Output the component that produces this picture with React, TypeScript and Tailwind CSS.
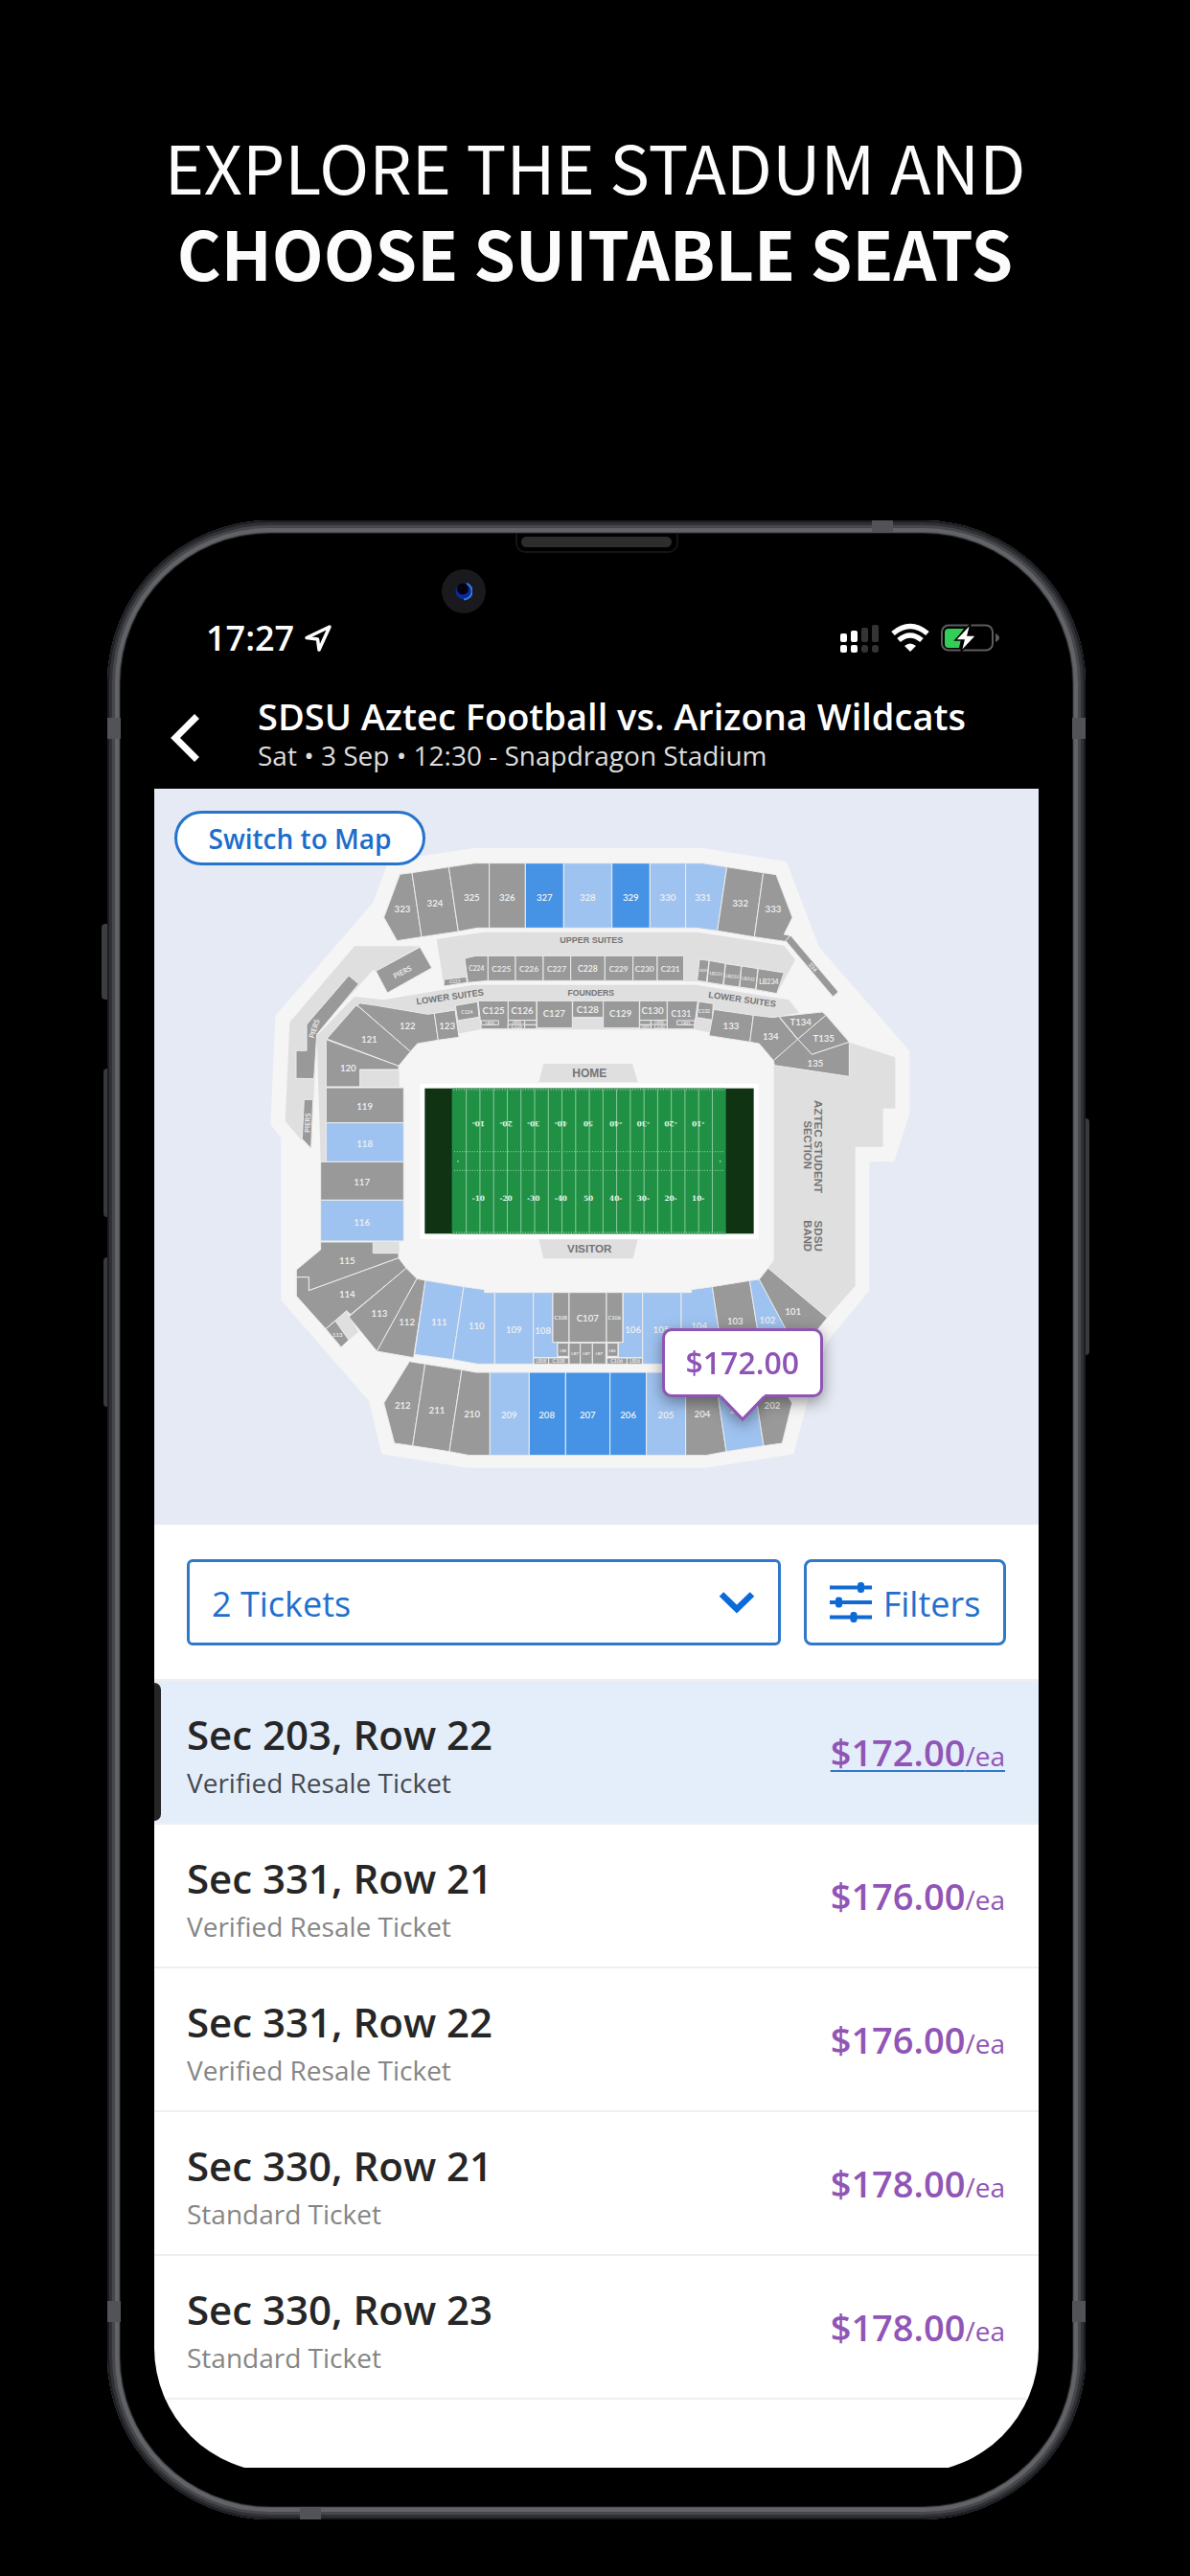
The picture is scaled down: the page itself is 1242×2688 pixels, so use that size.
import React from "react";

type Shape = { p: string; c?: "g" | "l" | "b" };
type Label = { t: string; x: number; y: number; s?: number; r?: number };

const FILL = { g: "#999999", l: "#9fc3f0", b: "#4693e6" };

const box = (x1: number, y1: number, x2: number, y2: number) =>
  `${x1},${y1} ${x2},${y1} ${x2},${y2} ${x1},${y2}`;

const SECTIONS: Shape[] = [
  // upper deck, home side
  { p: "472,157 510,152 540,353 463,365 422,292" },
  { p: "510,152 625,134 655,336 540,353" },
  { p: "625,134 705,122 752,122 752,325 715,325 655,336" },
  { p: box(752, 122, 865, 325) },
  { p: box(865, 122, 985, 325), c: "b" },
  { p: box(985, 122, 1136, 325), c: "l" },
  { p: box(1136, 122, 1255, 325), c: "b" },
  { p: box(1255, 122, 1367, 325), c: "l" },
  { p: "1367,122 1420,122 1496,134 1466,334 1400,325 1367,325", c: "l" },
  { p: "1496,134 1610,152 1582,353 1466,334" },
  { p: "1610,152 1650,158 1701,292 1675,345 1692,348 1685,368 1582,353" },
  { p: "1695,348 1845,525 1828,540 1680,365" },
  // upper suites
  { p: "675,420 710,412 748,412 748,490 685,496" },
  { p: box(748, 412, 834, 490) },
  { p: box(834, 412, 921, 490) },
  { p: box(921, 412, 1007, 490) },
  { p: box(1007, 412, 1114, 490) },
  { p: box(1114, 412, 1202, 490) },
  { p: box(1202, 412, 1278, 490) },
  { p: box(1278, 412, 1361, 490) },
  { p: "610,486 680,478 682,496 610,507" },
  { p: "1410,423 1440,427 1432,494 1403,490" },
  { p: "1441,427 1491,436 1484,503 1434,495" },
  { p: "1492,437 1541,444 1535,510 1486,503" },
  { p: "1542,444 1593,452 1586,517 1536,510" },
  { p: "1594,452 1675,465 1652,530 1587,518" },
  // lower bowl, home side
  { p: "345,560 400,568 560,595 580,592 592,676 527,687 505,712 340,568" },
  { p: "335,567 345,573 505,712 468,757 243,672" },
  { p: "241,674 468,757 468,768 347,768 347,822 241,822" },
  { p: "580,592 645,582 657,667 592,676" },
  { p: "646,568 715,556 720,604 653,615" },
  { p: "717,553 811,553 811,641 727,641" },
  { p: box(727, 615, 781, 628) },
  { p: box(811, 553, 900, 614) },
  { p: box(811, 614, 863, 641) },
  { p: box(811, 627, 863, 641) },
  { p: box(863, 614, 900, 628) },
  { p: box(863, 628, 900, 641) },
  { p: box(901, 553, 1012, 638) },
  { p: box(1013, 553, 1109, 605) },
  { p: box(1109, 553, 1222, 638) },
  { p: box(1223, 553, 1309, 614) },
  { p: box(1223, 614, 1258, 628) },
  { p: box(1223, 628, 1258, 641) },
  { p: box(1258, 614, 1309, 641) },
  { p: box(1258, 627, 1309, 641) },
  { p: "1309,553 1405,553 1393,641 1309,641" },
  { p: box(1340, 615, 1395, 628) },
  { p: "1408,555 1453,562 1450,613 1402,605" },
  { p: "1455,580 1579,598 1568,682 1440,662" },
  { p: "1579,598 1640,605 1658,602 1718,675 1642,740 1597,687 1568,682" },
  { p: "1660,602 1795,588 1806,598 1718,673" },
  { p: "1806,598 1879,682 1762,721 1718,673" },
  { p: "1718,673 1762,721 1879,682 1879,790 1645,755 1642,740" },
  // west end
  { p: box(241, 825, 484, 935) },
  { p: box(241, 935, 484, 1057), c: "l" },
  { p: box(224, 1057, 484, 1177) },
  { p: box(224, 1177, 484, 1305), c: "l" },
  { p: "224,1308 388,1308 388,1343 468,1343 468,1358 187,1460 187,1418 148,1418 148,1395 224,1332" },
  { p: "148,1418 187,1418 187,1460 468,1358 492,1390 318,1535 305,1523 240,1580 148,1477" },
  { p: "492,1390 525,1423 400,1650 312,1542" },
  { p: "240,1580 270,1555 312,1615 288,1637" },
  { p: "525,1423 552,1428 515,1670 400,1650" },
  // lower bowl, visitor side
  { p: "552,1428 672,1448 638,1676 518,1660", c: "l" },
  { p: "672,1448 737,1457 737,1466 769,1466 769,1690 715,1690 638,1676", c: "l" },
  { p: box(769, 1466, 890, 1690), c: "l" },
  { p: "890,1466 951,1466 951,1622 966,1622 966,1670 890,1670", c: "l" },
  { p: box(951, 1466, 1002, 1622) },
  { p: box(1002, 1466, 1119, 1622) },
  { p: box(1119, 1466, 1170, 1622) },
  { p: box(966, 1624, 1000, 1666) },
  { p: box(1002, 1624, 1037, 1690) },
  { p: box(1037, 1624, 1075, 1690) },
  { p: box(1075, 1624, 1117, 1690) },
  { p: box(1121, 1624, 1155, 1666) },
  { p: box(891, 1671, 938, 1690) },
  { p: box(938, 1671, 1001, 1690) },
  { p: box(1120, 1671, 1183, 1690) },
  { p: box(1183, 1671, 1231, 1690) },
  { p: "1171,1466 1232,1466 1232,1670 1156,1670 1156,1622 1171,1622", c: "l" },
  { p: box(1232, 1466, 1353, 1690), c: "l" },
  { p: "1353,1466 1385,1466 1385,1457 1450,1448 1485,1676 1410,1690 1353,1690", c: "l" },
  { p: "1450,1448 1567,1429 1605,1660 1485,1676" },
  { p: "1567,1429 1597,1425 1720,1650 1605,1665", c: "l" },
  { p: "1625,1390 1810,1545 1750,1620 1715,1645 1597,1425" },
  // upper deck, visitor side
  { p: "502,1682 551,1690 512,1946 455,1938 422,1812" },
  { p: "551,1690 666,1708 627,1964 512,1946" },
  { p: "666,1708 710,1716 754,1716 754,1976 690,1976 627,1964" },
  { p: box(754, 1716, 877, 1976), c: "l" },
  { p: box(877, 1716, 991, 1976), c: "b" },
  { p: box(991, 1716, 1130, 1976), c: "b" },
  { p: box(1130, 1716, 1244, 1976), c: "b" },
  { p: box(1244, 1716, 1367, 1976), c: "l" },
  { p: "1367,1716 1457,1716 1494,1964 1430,1976 1367,1976" },
  { p: "1457,1716 1475,1713 1572,1695 1611,1946 1494,1964", c: "l" },
  { p: "1572,1695 1620,1685 1700,1812 1669,1938 1611,1946" },
  // piers
  { p: "397,460 535,385 572,450 433,528" },
  { p: "312,474 343,500 212,658 203,797 147,796 147,709 180,709 180,627" },
  { p: "172,862 200,862 194,1015 166,985" },
];

const CONCOURSE: string[] = [
  "330,382 535,382 397,460 388,456 215,650 205,800 195,1010 160,985 113,930 127,620",
  "587,360 735,338 1405,338 1675,380 1710,425 1652,530 1400,492 720,492 610,507",
  "330,540 420,550 700,503 1400,503 1690,550 1722,590 1640,605 1440,652 1395,643 725,643 660,655 560,620 345,570 245,670 240,1056 224,1056 212,662",
  box(347, 770, 470, 822),
  box(388, 1306, 470, 1343),
  "305,1523 342,1590 312,1615 270,1555",
  "1643,755 1880,790 1880,683 2023,730 2023,890 1985,890 1985,1010 1898,1010 1898,1445 1810,1545 1625,1390 1643,1365",
  "922,750 1200,750 1217,808 907,808",
  "907,1300 1217,1300 1202,1360 922,1360",
];

const LABELS: Label[] = [
  { t: "323", x: 480, y: 265 }, { t: "324", x: 582, y: 247 }, { t: "325", x: 697, y: 229 },
  { t: "326", x: 808, y: 229 }, { t: "327", x: 925, y: 229 }, { t: "328", x: 1060, y: 229 },
  { t: "329", x: 1195, y: 229 }, { t: "330", x: 1311, y: 229 }, { t: "331", x: 1421, y: 229 },
  { t: "332", x: 1538, y: 248 }, { t: "333", x: 1641, y: 265 },
  { t: "334", x: 1765, y: 448, s: 18, r: 50 },
  { t: "C223", x: 644, y: 492, s: 14, r: -5 },
  { t: "C224", x: 712, y: 453, s: 20 }, { t: "C225", x: 790, y: 452, s: 25 },
  { t: "C226", x: 876, y: 452, s: 25 }, { t: "C227", x: 963, y: 452, s: 25 },
  { t: "C228", x: 1060, y: 452, s: 26 }, { t: "C229", x: 1157, y: 452, s: 25 },
  { t: "C230", x: 1238, y: 452, s: 25 }, { t: "C231", x: 1319, y: 452, s: 25 },
  { t: "LB230", x: 1421, y: 460, s: 8 }, { t: "LB231", x: 1462, y: 468, s: 14, r: 6 },
  { t: "LB232", x: 1513, y: 476, s: 14, r: 6 }, { t: "LB233", x: 1563, y: 484, s: 14, r: 6 },
  { t: "LB234", x: 1627, y: 492, s: 21 },
  { t: "122", x: 496, y: 631 }, { t: "121", x: 376, y: 674 }, { t: "120", x: 310, y: 763 },
  { t: "123", x: 620, y: 633 }, { t: "C124", x: 682, y: 589, s: 15 },
  { t: "C125", x: 765, y: 585 }, { t: "C126", x: 855, y: 585 }, { t: "C127", x: 955, y: 592 },
  { t: "C128", x: 1060, y: 580 }, { t: "C129", x: 1163, y: 592 }, { t: "C130", x: 1263, y: 585 },
  { t: "C131", x: 1353, y: 594, s: 26 }, { t: "C132", x: 1425, y: 586, s: 15 },
  { t: "LB25", x: 754, y: 622, s: 12 }, { t: "LB26", x: 838, y: 621, s: 12 },
  { t: "C126", x: 838, y: 634, s: 14 }, { t: "LB29", x: 1240, y: 634, s: 10 },
  { t: "LB30", x: 1284, y: 621, s: 12 }, { t: "C130", x: 1284, y: 634, s: 14 },
  { t: "LB31", x: 1368, y: 622, s: 12 },
  { t: "133", x: 1509, y: 633 }, { t: "134", x: 1633, y: 666 }, { t: "T134", x: 1727, y: 620 },
  { t: "T135", x: 1799, y: 671 }, { t: "135", x: 1773, y: 748 },
  { t: "119", x: 362, y: 885 }, { t: "118", x: 362, y: 1001 }, { t: "117", x: 353, y: 1121 },
  { t: "116", x: 353, y: 1247 }, { t: "115", x: 307, y: 1367 }, { t: "114", x: 307, y: 1471 },
  { t: "113", x: 408, y: 1532 }, { t: "113", x: 277, y: 1600, s: 18 }, { t: "112", x: 494, y: 1558 },
  { t: "111", x: 595, y: 1558 }, { t: "110", x: 712, y: 1572 }, { t: "109", x: 829, y: 1582 },
  { t: "108", x: 920, y: 1587 }, { t: "C108", x: 976, y: 1545, s: 17 },
  { t: "C107", x: 1060, y: 1548 }, { t: "C106", x: 1144, y: 1545, s: 17 },
  { t: "LB8", x: 983, y: 1648, s: 12 }, { t: "LB7", x: 1020, y: 1657, s: 13 },
  { t: "LB7", x: 1056, y: 1657, s: 13 }, { t: "LB7", x: 1096, y: 1657, s: 13 },
  { t: "LB6", x: 1137, y: 1648, s: 12 }, { t: "LB08", x: 915, y: 1681, s: 14 },
  { t: "C108", x: 969, y: 1681, s: 16 }, { t: "C106", x: 1151, y: 1681, s: 16 },
  { t: "LB06", x: 1208, y: 1681, s: 14 },
  { t: "106", x: 1202, y: 1582 }, { t: "105", x: 1290, y: 1582 }, { t: "104", x: 1409, y: 1570 },
  { t: "103", x: 1522, y: 1557 }, { t: "102", x: 1623, y: 1553 }, { t: "101", x: 1703, y: 1525 },
  { t: "212", x: 481, y: 1820 }, { t: "211", x: 588, y: 1834 }, { t: "210", x: 698, y: 1848 },
  { t: "209", x: 814, y: 1850 }, { t: "208", x: 932, y: 1850 }, { t: "207", x: 1060, y: 1850 },
  { t: "206", x: 1187, y: 1850 }, { t: "205", x: 1305, y: 1850 }, { t: "204", x: 1419, y: 1848 },
  { t: "203", x: 1530, y: 1835 }, { t: "202", x: 1638, y: 1820 },
  { t: "PIERS", x: 480, y: 463, s: 23, r: -27 }, { t: "PIERS", x: 204, y: 640, s: 23, r: -72 },
  { t: "PIERS", x: 183, y: 935, s: 23, r: -88 },
];

const ZONES: Label[] = [
  { t: "UPPER SUITES", x: 1072, y: 361, s: 27 },
  { t: "FOUNDERS", x: 1070, y: 527, s: 26 },
  { t: "LOWER SUITES", x: 629, y: 540, s: 28, r: -8 },
  { t: "LOWER SUITES", x: 1544, y: 548, s: 28, r: 8 },
  { t: "HOME", x: 1066, y: 778, s: 36 },
  { t: "VISITOR", x: 1066, y: 1327, s: 35 },
  { t: "AZTEC STUDENT", x: 1784, y: 1010, s: 35, r: 90 },
  { t: "SECTION", x: 1748, y: 1004, s: 34, r: 90 },
  { t: "SDSU", x: 1784, y: 1289, s: 35, r: 90 },
  { t: "BAND", x: 1748, y: 1289, s: 34, r: 90 },
];

const YARDS = ["-10", "-20", "-30", "-40", "50", "40-", "30-", "20-", "10-"];

function Texts({ items, size }: { items: Label[]; size: number }) {
  return (
    <>
      {items.map((l, i) => (
        <text
          key={i}
          x={l.x}
          y={l.y}
          fontSize={l.s ?? size}
          dy={(l.s ?? size) * 0.36}
          textAnchor="middle"
          transform={l.r ? `rotate(${l.r} ${l.x} ${l.y})` : undefined}
        >
          {l.t}
        </text>
      ))}
    </>
  );
}

function SeatMap() {
  return (
    <svg viewBox="-297 -111 2769 2304" className="block h-auto w-full" role="img" aria-label="Stadium seating map">
      <polygon
        fill="#f5f5f5"
        points="705,75 437,115 388,245 82,600 67,940 100,982 100,1490 375,1805 415,1972 685,2015 1430,2015 1705,1972 1750,1800 1810,1620 1942,1460 1942,1057 2020,1055 2068,905 2068,710 1785,385 1682,117 1420,75"
      />
      {CONCOURSE.map((p) => (
        <polygon key={p} points={p} fill="#dfdfdf" />
      ))}
      <g stroke="#ececec" strokeWidth="3">
        {SECTIONS.map((s) => (
          <polygon key={s.p} points={s.p} fill={FILL[s.c ?? "g"]} />
        ))}
      </g>
      <rect x="535" y="812" width="1060" height="487" fill="#ffffff" />
      <rect x="550" y="827" width="1030" height="455" fill="#103314" />
      <rect x="635" y="827" width="858" height="455" fill="#1f9044" />
      <g stroke="#8ccb9f" strokeWidth="3">
        {Array.from({ length: 19 }, (_, i) => (
          <line key={i} x1={680 + i * 42.8} x2={680 + i * 42.8} y1="830" y2="1280" />
        ))}
      </g>
      <g stroke="#8ccb9f" strokeWidth="4" strokeDasharray="3 5">
        <line x1="642" x2="1488" y1="1025" y2="1025" />
        <line x1="642" x2="1488" y1="1084" y2="1084" />
        <line x1="640" x2="1490" y1="831" y2="831" />
        <line x1="640" x2="1490" y1="1278" y2="1278" />
      </g>
      <circle cx="654" cy="1055" r="3" fill="#8ccb9f" />
      <circle cx="1475" cy="1055" r="3" fill="#8ccb9f" />
      <g fill="#e6f5ea" fontWeight="700" className="font-['DejaVu_Serif',serif]">
        {YARDS.map((y, i) => {
          const x = 718 + i * 86;
          return (
            <g key={i} fontSize="22" textAnchor="middle">
              <text x={x} y="1180">{y}</text>
              <text x={x} y="930" transform={`rotate(180 ${x} 930)`}>{YARDS[8 - i]}</text>
            </g>
          );
        })}
      </g>
      <g fill="#f1f1f1" fontWeight="600" className="font-['Lato',sans-serif]">
        <Texts items={LABELS} size={29} />
      </g>
      <g fill="#747474" fontWeight="700" className="font-['Liberation_Sans',sans-serif]">
        <Texts items={ZONES} size={28} />
      </g>
    </svg>
  );
}

function PriceFlag() {
  return (
    <div className="absolute left-[66.5%] top-[73.3%] flex -translate-x-1/2 flex-col items-center drop-shadow-[0_5px_8px_rgba(0,0,0,0.4)]">
      <div className="flex h-[72px] w-[168px] items-center justify-center rounded-[10px] border-3 border-[#8f54b4] bg-white text-[32px] font-semibold text-[#8e53b5]">
        $172.00
      </div>
      <svg viewBox="0 0 46 28" className="-mt-[3px] h-[28px] w-[46px]" aria-hidden="true">
        <path d="M0 0H46V3L23 27L0 3Z" fill="#ffffff" />
        <path d="M0 2L23 26L46 2" fill="none" stroke="#8f54b4" strokeWidth="3" />
      </svg>
    </div>
  );
}

function StatusIcons() {
  return (
    <svg viewBox="0 0 168 32" className="h-[32px] w-[168px]" aria-hidden="true">
      <g fill="#ffffff">
        <rect x="1" y="11" width="7" height="9" rx="2" />
        <rect x="12" y="8" width="7" height="12" rx="2" />
        <rect x="1" y="23" width="7" height="8" rx="2" />
        <rect x="12" y="23" width="7" height="8" rx="2" />
      </g>
      <g fill="#343434">
        <rect x="23" y="5" width="7" height="15" rx="2" />
        <rect x="34" y="2" width="7" height="18" rx="2" />
        <rect x="23" y="23" width="7" height="8" rx="3" />
        <rect x="34" y="23" width="7" height="8" rx="3" />
      </g>
      <g fill="none" stroke="#ffffff" strokeWidth="5.5">
        <path d="M56 11Q74 -4 92 11" />
        <path d="M62 18Q74 8 86 18" />
      </g>
      <path d="M68 24Q74 19 80 24L74 30Z" fill="#ffffff" />
      <rect x="107" y="2.500" width="53" height="26" rx="7" fill="none" stroke="#5c5c5c" strokeWidth="2" />
      <path d="M163 11Q167 13 167 15.500Q167 18 163 20Z" fill="#5c5c5c" />
      <path d="M114 6H130L122 17H127L125 26H114Q110 26 110 22V10Q110 6 114 6Z" fill="#32ce57" />
      <path d="M137 1L121 18H130L127 30L143 13H134Z" fill="#ffffff" stroke="#000000" strokeWidth="1.500" />
    </svg>
  );
}

function SideBands() {
  return (
    <>
      <span className="h-[22px] w-[14px] bg-[#525357]" />
      <span className="h-[22px] w-[14px] bg-[#525357]" />
    </>
  );
}

function PhoneShell({ children }: { children: React.ReactNode }) {
  return (
    <div className="relative ml-[112px] mr-[109px]">
      <div className="absolute inset-y-0 right-full flex flex-col items-end pt-[421px]">
        <span className="h-[79px] w-[6px] rounded-l-sm bg-[#3c3d40]" />
        <span className="mt-[72px] h-[155px] w-[4px] rounded-l-sm bg-[#38393c]" />
        <span className="mt-[42px] h-[156px] w-[4px] rounded-l-sm bg-[#38393c]" />
      </div>
      <div className="absolute inset-y-0 left-full pt-[624px]">
        <span className="block h-[247px] w-[4px] rounded-r-sm bg-[#38393c]" />
      </div>
      <div className="relative overflow-hidden rounded-[170px] bg-black px-[49px] pb-[54px] shadow-[inset_0_0_0_2px_#1c1d21,inset_0_0_0_5px_#303135,inset_0_0_0_8px_#47484c,inset_0_0_0_12px_#626367,inset_0_0_0_13px_#505155,inset_0_0_0_14px_#1a1a1d]">
        <div className="absolute inset-y-0 left-0 flex flex-col justify-between py-[206px]">
          <SideBands />
        </div>
        <div className="absolute inset-y-0 right-0 flex flex-col justify-between py-[206px]">
          <SideBands />
        </div>
        <div className="absolute inset-x-0 inset-y-0 flex flex-col justify-between px-[201px]">
          <span className="h-[13px] w-[22px] self-end bg-[#525357]" />
          <span className="h-[13px] w-[22px] bg-[#525357]" />
        </div>
        <div className="relative">{children}</div>
      </div>
    </div>
  );
}

const LISTINGS = [
  { seat: "Sec 203, Row 22", kind: "Verified Resale Ticket", price: "$172.00", active: true },
  { seat: "Sec 331, Row 21", kind: "Verified Resale Ticket", price: "$176.00" },
  { seat: "Sec 331, Row 22", kind: "Verified Resale Ticket", price: "$176.00" },
  { seat: "Sec 330, Row 21", kind: "Standard Ticket", price: "$178.00" },
  { seat: "Sec 330, Row 23", kind: "Standard Ticket", price: "$178.00" },
];

function ListingRow({ seat, kind, price, active }: (typeof LISTINGS)[number]) {
  return (
    <li className={active ? "flex border-b-2 border-[#eeeff0] bg-[#e4eefb]" : "flex border-b-2 border-[#eeeff0]"}>
      <span className={active ? "my-[2px] w-[7px] rounded-r-[7px] bg-[#262626]" : "w-[7px]"} />
      <a href="#listing" className="flex h-[148px] flex-1 items-center justify-between pl-[27px] pr-[35px]">
        <span className="flex flex-col pt-2">
          <span className="text-[42px] font-semibold leading-[56px] text-[#262626]">{seat}</span>
          <span className={active ? "text-[28px] leading-[44px] text-[#46494e]" : "text-[28px] leading-[44px] text-[#858585]"}>
            {kind}
          </span>
        </span>
        <span
          className={
            active
              ? "text-[#9055b6] underline decoration-[#2f77c9] decoration-2 underline-offset-4"
              : "text-[#9055b6]"
          }
        >
          <span className="text-[38px] font-semibold">{price}</span>
          <span className="text-[28px]">/ea</span>
        </span>
      </a>
    </li>
  );
}

export default function App() {
  return (
    <main className="flex min-h-screen flex-col bg-black pb-[59px] font-['Open_Sans',sans-serif]">
      <h1 className="pb-[235px] pt-32 text-center font-['Noto_Sans_CJK_SC',sans-serif] text-[70px] leading-[90px] text-[#fcfcfc]">
        <span className="block font-normal">EXPLORE THE STADUM AND</span>
        <span className="block font-bold">CHOOSE SUITABLE SEATS</span>
      </h1>

      <PhoneShell>
        <header className="flex flex-col text-white">
          <div className="mt-[14px] flex h-[20px] w-[170px] justify-center self-center rounded-b-[10px] border-2 border-t-0 border-[#131416] pt-[3px]">
            <span className="h-[11px] w-[157px] rounded-full bg-[#2d2d2e]" />
          </div>
          <div className="ml-[300px] mt-[17px] flex size-[46px] items-center justify-center rounded-full bg-[#1a1a1e]">
            <svg viewBox="0 0 18 20" className="h-[20px] w-[18px]" aria-hidden="true">
              <circle cx="9" cy="10" r="8.500" fill="#0c2a9c" />
              <path d="M9 18.500A8.500 8.500 0 0 0 12 2" fill="none" stroke="#2f7fe0" strokeWidth="2" />
              <circle cx="8" cy="7.500" r="6" fill="#02030c" />
            </svg>
          </div>
          <div className="flex h-[51px] items-center justify-between pl-[54px] pr-[40px]">
            <div className="flex items-center gap-[10px]">
              <span className="text-[36px] font-semibold">17:27</span>
              <svg viewBox="0 0 30 30" className="size-[30px]" aria-hidden="true">
                <path d="M27 3L3 14.500L14.500 16L16 27Z" fill="none" stroke="#ffffff" strokeWidth="3.500" strokeLinejoin="round" />
              </svg>
            </div>
            <StatusIcons />
          </div>
          <div className="flex h-[132px] items-start pt-[33px]">
            <button type="button" aria-label="Back" className="ml-[16px] mt-[19px] w-[92px]">
              <svg viewBox="0 0 32 54" className="h-[54px] w-[32px]" aria-hidden="true">
                <path d="M28.500 4.500L6 27L28.500 49.500" fill="none" stroke="#ffffff" strokeWidth="7" />
              </svg>
            </button>
            <div>
              <h2 className="text-[38px] font-semibold leading-[46px]">SDSU Aztec Football vs. Arizona Wildcats</h2>
              <p className="text-[28px] leading-[36px] text-[#dedede]">Sat • 3 Sep • 12:30 - Snapdragon Stadium</p>
            </div>
          </div>
        </header>

        <div className="overflow-hidden">
          <div className="-mb-[5px] overflow-hidden rounded-b-[130px] bg-white">
            <section className="relative bg-[#e6eaf4]">
              <SeatMap />
              <button
                type="button"
                className="absolute left-[21px] top-[23px] h-[57px] w-[262px] rounded-full border-3 border-[#2474cc] bg-white text-[28px] font-semibold text-[#1c6dcb]"
              >
                Switch to Map
              </button>
              <PriceFlag />
            </section>

            <div className="flex gap-[24px] border-b-2 border-[#eeeff0] px-[34px] pb-[35px] pt-[36px] text-[36px] text-[#1f70cd]">
              <div className="grid flex-1 items-center">
                <select
                  aria-label="Number of tickets"
                  defaultValue="2"
                  className="col-start-1 row-start-1 h-[90px] w-full appearance-none rounded-[6px] border-3 border-[#3079c8] bg-white pl-[23px] pt-1"
                >
                  <option value="2">2 Tickets</option>
                </select>
                <svg viewBox="0 0 38 24" className="pointer-events-none col-start-1 row-start-1 mr-[27px] h-[24px] w-[38px] justify-self-end" aria-hidden="true">
                  <path d="M3 3.500L19 19L35 3.500" fill="none" stroke="#0a6ad8" strokeWidth="6.500" />
                </svg>
              </div>
              <button
                type="button"
                className="flex h-[90px] w-[211px] items-center justify-center gap-[12px] rounded-[8px] border-3 border-[#3079c8] bg-white"
              >
                <svg viewBox="0 0 44 44" className="size-[44px]" aria-hidden="true">
                  <path d="M0 6.500H44M0 22H44M0 37.500H44" stroke="#1269d2" strokeWidth="4" />
                  <g fill="#0a6ad8">
                    <rect x="29" y="1" width="7" height="11" rx="3" />
                    <rect x="6" y="16.500" width="7" height="11" rx="3" />
                    <rect x="21.500" y="32" width="7" height="11" rx="3" />
                  </g>
                </svg>
                <span className="pt-1">Filters</span>
              </button>
            </div>

            <ul className="pb-[76px]">
              {LISTINGS.map((l) => (
                <ListingRow key={l.seat} {...l} />
              ))}
            </ul>
          </div>
        </div>
      </PhoneShell>
    </main>
  );
}
